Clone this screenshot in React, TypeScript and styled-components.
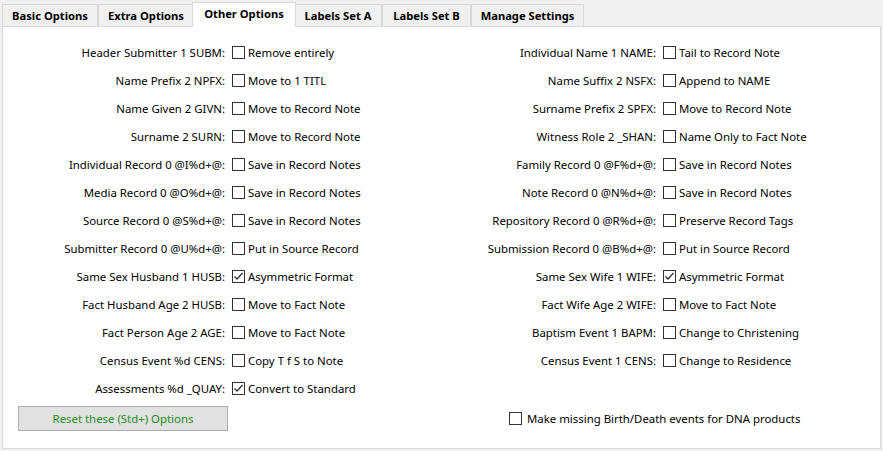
import { useState } from 'react';
import styled, { createGlobalStyle } from 'styled-components';

const Global = createGlobalStyle`
    html, body {
        margin: 0;
        padding: 0;
        background: #f0f0f0;
    }
    body {
        font-family: "Noto Sans", "Open Sans", sans-serif;
        font-size: 11.4px;
        color: #000;
    }
`;

const Window = styled.div`
    width: 883px;
    height: 451px;
    box-sizing: border-box;
    padding: 2px 2px 2px 2px;
    display: flex;
    flex-direction: column;
`;

const TabBar = styled.div`
    display: flex;
    align-items: flex-end;
    height: 25px;
`;

const Tab = styled.div<{ $active?: boolean; $width: number }>`
    box-sizing: border-box;
    width: ${(p) => p.$width}px;
    height: ${(p) => (p.$active ? 25 : 22)}px;
    margin: ${(p) => (p.$active ? '0 -2px 0 -2px' : '0 0 1px 0')};
    padding-bottom: ${(p) => (p.$active ? 4 : 1)}px;
    border: 1px solid #d9d9d9;
    border-bottom: none;
    background: ${(p) => (p.$active ? '#ffffff' : '#f0f0f0')};
    position: relative;
    z-index: ${(p) => (p.$active ? 2 : 0)};
    display: flex;
    align-items: center;
    justify-content: center;
    font-weight: 700;
    font-size: 11.2px;
    white-space: nowrap;
    cursor: default;
`;

const Panel = styled.div`
    flex: 1;
    margin-top: -1px;
    background: #ffffff;
    border: 1px solid #d9d9d9;
    padding-top: 11px;
    display: grid;
    grid-template-columns: 431px 1fr;
    grid-template-rows: auto auto;
    align-content: start;
`;

const Column = styled.div`
    display: grid;
    grid-template-columns: 226px 13px auto;
    grid-auto-rows: 28px;
    column-gap: 3px;
    align-items: center;
    align-content: start;
`;

const FieldLabel = styled.span`
    text-align: right;
    white-space: nowrap;
    padding-right: 4px;
`;

const OptionText = styled.span`
    white-space: nowrap;
`;

const Box = styled.span<{ $checked: boolean }>`
    box-sizing: border-box;
    width: 13px;
    height: 13px;
    border: 1px solid #333333;
    background: #ffffff;
    display: inline-flex;
    align-items: center;
    justify-content: center;
    svg {
        display: ${(p) => (p.$checked ? 'block' : 'none')};
    }
`;

const Footer = styled.div`
    grid-column: 1 / 3;
    display: grid;
    grid-template-columns: 431px 1fr;
    align-items: center;
    padding-top: 4px;
`;

const ResetButton = styled.button`
    box-sizing: border-box;
    margin-left: 15px;
    width: 210px;
    height: 25px;
    background: #e1e1e1;
    border: 1px solid #adadad;
    color: #1f8f1f;
    font-family: inherit;
    font-size: 11.4px;
    padding: 0;
    display: block;
`;

const FooterCheck = styled.label`
    display: flex;
    align-items: center;
    gap: 5px;
    margin-left: 75px;
    white-space: nowrap;
`;

function Check({ checked, onToggle }: { checked: boolean; onToggle: () => void }) {
    return (
        <Box $checked={checked} onClick={onToggle}>
            <svg width="11" height="11" viewBox="0 0 11 11">
                <polyline points="1.5,5.5 4,8 9.5,2" fill="none" stroke="#333" strokeWidth="1.3" />
            </svg>
        </Box>
    );
}

type Row = [string, string, boolean];

const leftRows: Row[] = [
    ['Header Submitter 1 SUBM:', 'Remove entirely', false],
    ['Name Prefix 2 NPFX:', 'Move to 1 TITL', false],
    ['Name Given 2 GIVN:', 'Move to Record Note', false],
    ['Surname 2 SURN:', 'Move to Record Note', false],
    ['Individual Record 0 @I%d+@:', 'Save in Record Notes', false],
    ['Media Record 0 @O%d+@:', 'Save in Record Notes', false],
    ['Source Record 0 @S%d+@:', 'Save in Record Notes', false],
    ['Submitter Record 0 @U%d+@:', 'Put in Source Record', false],
    ['Same Sex Husband 1 HUSB:', 'Asymmetric Format', true],
    ['Fact Husband Age 2 HUSB:', 'Move to Fact Note', false],
    ['Fact Person Age 2 AGE:', 'Move to Fact Note', false],
    ['Census Event %d CENS:', 'Copy T f S to Note', false],
    ['Assessments %d _QUAY:', 'Convert to Standard', true],
];

const rightRows: Row[] = [
    ['Individual Name 1 NAME:', 'Tail to Record Note', false],
    ['Name Suffix 2 NSFX:', 'Append to NAME', false],
    ['Surname Prefix 2 SPFX:', 'Move to Record Note', false],
    ['Witness Role 2 _SHAN:', 'Name Only to Fact Note', false],
    ['Family Record 0 @F%d+@:', 'Save in Record Notes', false],
    ['Note Record 0 @N%d+@:', 'Save in Record Notes', false],
    ['Repository Record 0 @R%d+@:', 'Preserve Record Tags', false],
    ['Submission Record 0 @B%d+@:', 'Put in Source Record', false],
    ['Same Sex Wife 1 WIFE:', 'Asymmetric Format', true],
    ['Fact Wife Age 2 WIFE:', 'Move to Fact Note', false],
    ['Baptism Event 1 BAPM:', 'Change to Christening', false],
    ['Census Event 1 CENS:', 'Change to Residence', false],
];

const tabs: [string, number][] = [
    ['Basic Options', 96],
    ['Extra Options', 96],
    ['Other Options', 104],
    ['Labels Set A', 88],
    ['Labels Set B', 89],
    ['Manage Settings', 113],
];

function FieldRow({ label, text, checked, onToggle }: { label: string; text: string; checked: boolean; onToggle: () => void }) {
    return (
        <>
            <FieldLabel>{label}</FieldLabel>
            <Check checked={checked} onToggle={onToggle} />
            <OptionText onClick={onToggle}>{text}</OptionText>
        </>
    );
}

function OptionColumn({ rows, prefix }: { rows: Row[]; prefix: string }) {
    const [state, setState] = useState<boolean[]>(rows.map((r) => r[2]));
    const toggle = (i: number) => setState((s) => s.map((v, j) => (j === i ? !v : v)));
    return (
        <Column>
            {rows.map(([label, text], i) => (
                <FieldRow key={prefix + i} label={label} text={text} checked={state[i]} onToggle={() => toggle(i)} />
            ))}
        </Column>
    );
}

export default function App() {
    const [active, setActive] = useState(2);
    const [dna, setDna] = useState(false);
    return (
        <Window>
            <Global />
            <TabBar>
                {tabs.map(([name, width], i) => (
                    <Tab key={name} $width={i === active ? 104 : width} $active={i === active} onClick={() => setActive(i)}>
                        {name}
                    </Tab>
                ))}
            </TabBar>
            <Panel>
                <OptionColumn rows={leftRows} prefix="l" />
                <OptionColumn rows={rightRows} prefix="r" />
                <Footer>
                    <div>
                        <ResetButton>Reset these (Std+) Options</ResetButton>
                    </div>
                    <FooterCheck>
                        <Check checked={dna} onToggle={() => setDna(!dna)} />
                        Make missing Birth/Death events for DNA products
                    </FooterCheck>
                </Footer>
            </Panel>
        </Window>
    );
}
